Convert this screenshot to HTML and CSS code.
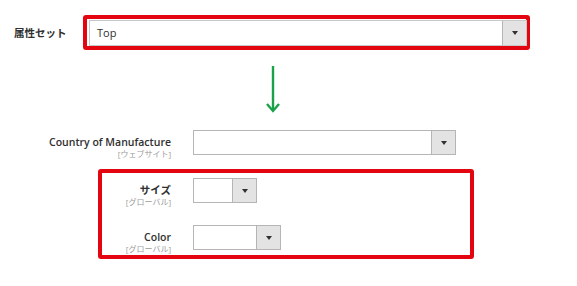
FILE: index.html
```html
<!DOCTYPE html>
<html lang="ja">
<head>
  <meta charset="UTF-8" />
  <title>属性セット</title>
  <link rel="stylesheet" href="styles.css">
</head>
<body>

<div class="set-row">
  <label class="set-label">属性セット</label>
  <div class="mark mark-set">
    <div class="select select-wide">
      <span class="select-value">Top</span>
      <span class="select-btn"><span class="caret"></span></span>
    </div>
  </div>
</div>

<div class="arrow-row">
  <svg class="arrow" width="16" height="48" viewBox="0 0 16 48">
    <line x1="8" y1="0" x2="8" y2="44" stroke="#1aa24b" stroke-width="2.4" />
    <polyline points="2,38 8,45 14,38" fill="none" stroke="#1aa24b" stroke-width="2.4" />
  </svg>
</div>

<div class="field field-country">
  <div class="field-label">
    <span class="label-text">Country of Manufacture</span>
    <span class="scope">[ウェブサイト]</span>
  </div>
  <div class="select select-country">
    <span class="select-value"></span>
    <span class="select-btn"><span class="caret"></span></span>
  </div>
</div>

<div class="mark mark-group">
  <div class="field">
    <div class="field-label">
      <span class="label-text">サイズ</span>
      <span class="scope">[グローバル]</span>
    </div>
    <div class="select select-size">
      <span class="select-value"></span>
      <span class="select-btn"><span class="caret"></span></span>
    </div>
  </div>
  <div class="field">
    <div class="field-label">
      <span class="label-text">Color</span>
      <span class="scope">[グローバル]</span>
    </div>
    <div class="select select-color">
      <span class="select-value"></span>
      <span class="select-btn"><span class="caret"></span></span>
    </div>
  </div>
</div>

</body>
</html>
```

FILE: styles.css
```css
* {
  margin: 0;
  padding: 0;
  box-sizing: border-box;
}
body {
  font-family: "Open Sans", "Noto Sans CJK JP", sans-serif;
  background: #fff;
  color: #303030;
  width: 577px;
  height: 286px;
  overflow: hidden;
}

/* red annotation frames */
.mark {
  border: 4px solid #e3050f;
  border-radius: 3px;
}

/* attribute set row */
.set-row {
  display: flex;
  align-items: center;
  padding-top: 15px;
}
.set-label {
  width: 83px;
  padding-left: 14px;
  font-size: 10.5px;
  font-weight: bold;
}
.mark-set {
  width: 447px;
  height: 35px;
  padding: 1px 0 0 2px;
}

/* fake selects */
.select {
  display: flex;
  height: 25px;
  border: 1px solid #b5b5b5;
  background: #fff;
}
.select-wide {
  height: 26px;
  width: 438px;
  border-color: #c8c8c8;
}
.select-value {
  flex: 1;
  font-size: 11px;
  line-height: 24px;
  padding-left: 7px;
}
.select-btn {
  width: 24px;
  background: #e3e3e3;
  border-left: 1px solid #b5b5b5;
  display: flex;
  align-items: center;
  justify-content: center;
}
.caret {
  width: 0;
  height: 0;
  border-left: 3px solid transparent;
  border-right: 3px solid transparent;
  border-top: 4px solid #303030;
}
.select-country { width: 263px; }
.select-size { width: 64px; }
.select-color { width: 88px; }

/* arrow */
.arrow-row {
  padding: 16px 0 0 265px;
  height: 80px;
}
.arrow {
  display: block;
}

/* attribute fields */
.field {
  display: flex;
  align-items: flex-start;
}
.field-label {
  display: flex;
  flex-direction: column;
  align-items: flex-end;
  width: 171px;
  margin-right: 22px;
  padding-top: 5px;
}
.label-text {
  font-size: 10.5px;
  font-weight: 600;
  line-height: 14px;
}
.scope {
  font-size: 8px;
  color: #9a9a9a;
  line-height: 10px;
}
.mark-group {
  margin: 10px 0 0 98px;
  width: 376px;
  height: 90px;
  padding-top: 5px;
}
.mark-group .field-label {
  width: 69px;
}
.mark-group .field + .field {
  margin-top: 18px;
}
```
